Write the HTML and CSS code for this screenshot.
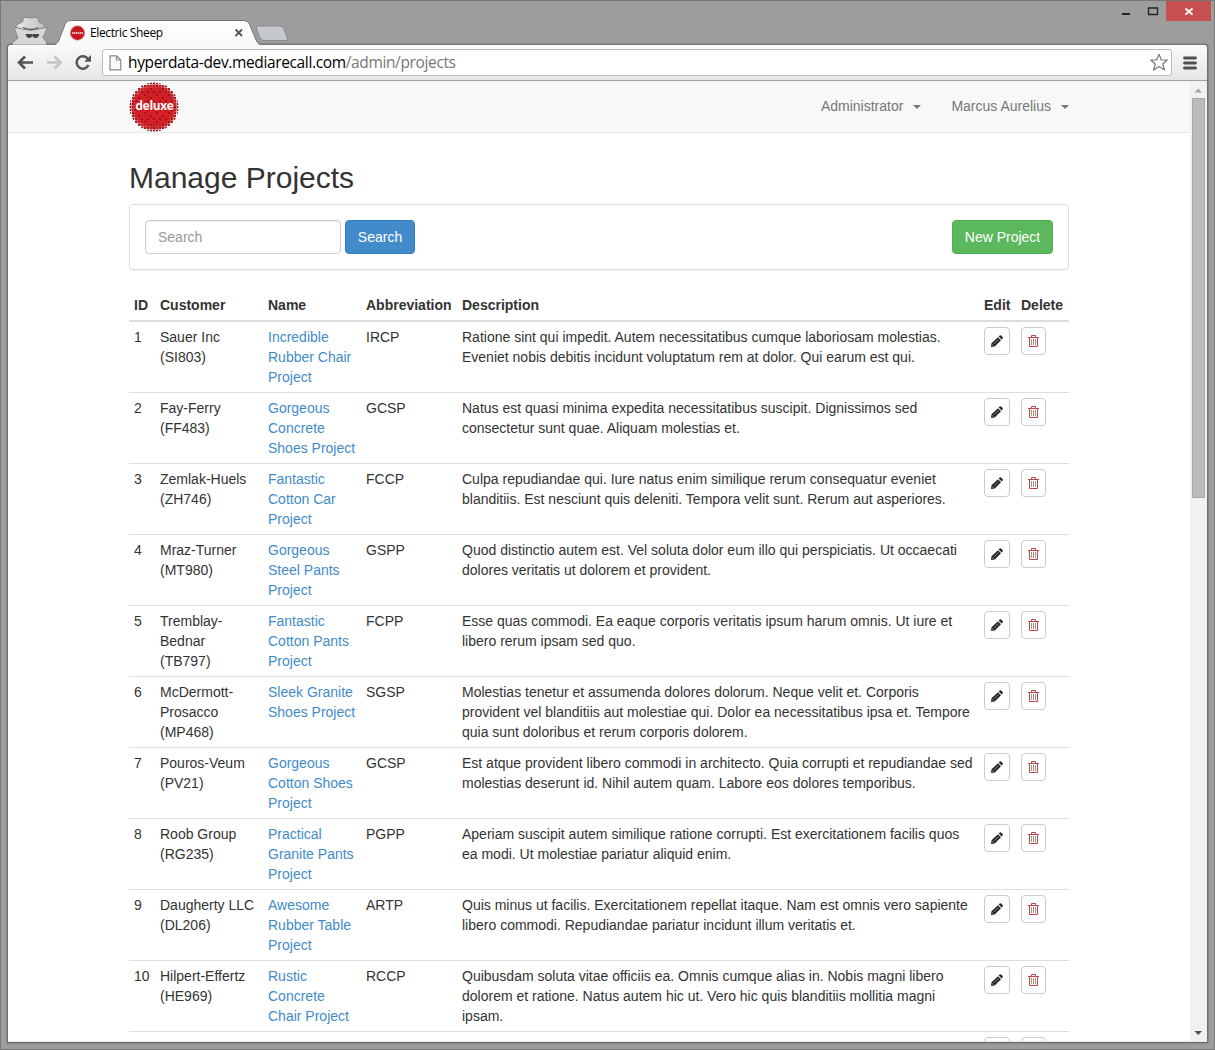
FILE: index.html
```html
<!DOCTYPE html>
<html lang="en">
<head>
<meta charset="utf-8">
<title>Electric Sheep</title>
<link rel="stylesheet" href="styles.css">
</head>
<body>
<svg class="defs" width="0" height="0">
  <defs>
    <linearGradient id="tabfill" x1="0" y1="0" x2="0" y2="1"><stop offset="0" stop-color="#fff"/><stop offset="1" stop-color="#f8f8f8"/></linearGradient>
    <linearGradient id="hat" x1="0" y1="0" x2="1" y2="0"><stop offset="0" stop-color="#e8e8e8"/><stop offset="1" stop-color="#c0c0c0"/></linearGradient>
    <radialGradient id="core"><stop offset="0" stop-color="#d92027"/><stop offset=".78" stop-color="#d11f25"/><stop offset=".92" stop-color="#d11f25" stop-opacity=".75"/><stop offset="1" stop-color="#d11f25" stop-opacity="0"/></radialGradient>
    <pattern id="dots" width="3" height="3" patternUnits="userSpaceOnUse"><rect width="2" height="2" fill="#7a2224"/></pattern>
    <pattern id="grain" width="12" height="9" patternUnits="userSpaceOnUse"><path d="M0 0h2v2H0zM6 0h2v2H6zM3 3h2v2H3zM9 6h2v2H9zM6 6h1v1H6z" fill="#5f0508" opacity=".45"/></pattern>
    <symbol id="pencil" viewBox="0 0 14 14"><path d="M1 13l.5-3.700L8 3.200l3 3L4.800 12.500zM8.700 2.600l1-1q.7-.6 1.400 0l1.500 1.500q.6.7 0 1.400l-1 1z" fill="#26262e"/><path d="M1.900 10.200l2 2M4 9.900l4.600-4.600" stroke="#a09a98" stroke-width=".8"/></symbol>
    <symbol id="trash" viewBox="0 0 11 12"><path d="M0 2.500h11M3.500 2.500v-2h4v2M1.500 3v8.500h8V3" fill="none" stroke="#b8484a"/><path d="M3.500 4v6M7.500 4v6" stroke="#b98a90"/><path d="M5.500 4v6" stroke="#6aa564"/></symbol>
  </defs>
</svg>
<div class="window">
  <header class="titlebar">
    <svg class="tabs" width="300" height="45" viewBox="0 0 300 45">
      <g stroke="#888" stroke-width="1">
        <path d="M12.500 45V42.500L18 38L14 27.500L19.500 28L23 25.500H38.500L42 28L47.500 27.500L43 37.500L46.500 42V45Z" fill="#d6d6d6"/>
        <path d="M15.500 27Q18 23 22.500 22L23.500 18Q27 16.500 30.500 18Q34 16.500 38 18L39 22Q43 23 45.500 27Q30 33 15.500 27Z" fill="url(#hat)"/>
      </g>
      <path d="M23 27.500Q31 31.500 38.500 27.500" fill="none" stroke="#555" stroke-width="1.300"/>
      <path d="M25.500 34H31.500L32 35L33 34H39Q39 38 35.500 38Q33 38 32.500 36Q31.500 38 29 38Q26 37.500 25.500 34Z" fill="#444"/>
      <path d="M50 45.500Q57 45.500 59 40L65 24.500Q66.500 20.500 70 20.500H244Q248 20.500 249.500 24.500L256 40Q258 45.500 265 45.500Z" fill="url(#tabfill)" stroke="#777"/>
      <path d="M258.500 26H280Q283 26 284 29L287.500 38Q288.500 40.500 285 40.500H264Q261 40.500 260 38L256.500 29Q255.500 26 258.500 26Z" fill="#c5c9ce" stroke="#888"/>
      <circle cx="77.500" cy="33" r="7.200" fill="#c3191f" stroke="#d88" stroke-width=".6"/>
      <path d="M72 33H83" stroke="#f1b9bb" stroke-width="2.200" stroke-dasharray="1.500 .5"/>
      <path d="M235.500 29.500L242 36M242 29.500L235.500 36" stroke="#555" stroke-width="1.800"/>
    </svg>
    <span class="tab-title">Electric Sheep</span>
    <svg class="controls" width="100" height="22" viewBox="0 0 100 22">
      <path d="M8 13h8v2h-8z" fill="#222"/>
      <path d="M34.500 8h9v6.500h-9zM34 8h10" fill="none" stroke="#222" stroke-width="1.300"/>
      <path d="M52 1h45v20H52z" fill="#c75050"/>
      <path d="M71.500 8.500L78.500 14.700M78.500 8.500L71.500 14.700" stroke="#fff" stroke-width="1.800"/>
    </svg>
  </header>
  <div class="frame">
    <div class="toolbar">
      <svg class="nav-icons" width="94" height="35" viewBox="1 0 94 35">
        <path d="M26 17.500H12M18 11.500L12 17.500L18 23.500" fill="none" stroke="#555" stroke-width="2.600"/>
        <path d="M40 17.500H53M47.500 11.500L53.500 17.500L47.500 23.500" fill="none" stroke="#c4c4c4" stroke-width="2.600"/>
        <path d="M81 14A6.200 6.200 0 1 0 81.500 20" fill="none" stroke="#555" stroke-width="2.500"/><path d="M84 10V16.700H77.300Z" fill="#555"/>
      </svg>
      <div class="address">
        <svg width="13" height="16" viewBox="0 0 13 16"><path d="M1 .8H7.500L11.800 5V14.800H1ZM7.500 .8V5H11.800" fill="#fafafa" stroke="#888" stroke-width="1.200"/></svg>
        <span class="url">hyperdata-dev.mediarecall.com<span class="path">/admin/projects</span></span>
        <svg class="star" width="20" height="19" viewBox="0 0 20 19"><path d="M10 1.200L12.400 7H18.300L13.700 11L15.500 17L10 13.600L4.500 17L6.300 11L1.700 7H7.600Z" fill="#fff" stroke="#777" stroke-width="1.200" stroke-linejoin="round"/></svg>
      </div>
      <svg class="menu" width="14" height="14" viewBox="0 0 14 14"><path d="M1.500 2H12.500M1.500 7H12.500M1.500 12H12.500" stroke="#505050" stroke-width="2.800" stroke-linecap="round"/></svg>
    </div>
    <div class="viewport">
      <main class="page">
        <nav class="navbar">
          <div class="container bar">
            <svg class="logo" width="50" height="50" viewBox="0 0 50 50">
              <circle cx="25" cy="25" r="24.500" fill="url(#dots)"/>
              <circle cx="25" cy="25" r="24" fill="url(#core)"/>
              <circle cx="25" cy="25" r="22" fill="url(#grain)"/>
              <text x="25.500" y="27.500" text-anchor="middle" textLength="38" lengthAdjust="spacingAndGlyphs" class="logo-text">deluxe</text>
            </svg>
            <div class="menus">
              <span class="w-admin">Administrator</span><i class="caret"></i>
              <span class="w-user">Marcus Aurelius</span><i class="caret"></i>
            </div>
          </div>
        </nav>
        <div class="container">
          <h1>Manage Projects</h1>
          <div class="panel">
            <input class="search" type="text" placeholder="Search">
            <button class="btn primary">Search</button>
            <button class="btn success">New Project</button>
          </div>
          <table class="projects">
            <colgroup><col class="c-id"><col class="c-customer"><col class="c-name"><col class="c-abbr"><col class="c-desc"><col class="c-edit"><col class="c-delete"></colgroup>
            <thead><tr><th>ID</th><th>Customer</th><th>Name</th><th>Abbreviation</th><th>Description</th><th>Edit</th><th>Delete</th></tr></thead>
            <tbody>
              <tr><td>1</td><td>Sauer Inc<br>(SI803)</td><td><a>Incredible<br>Rubber Chair<br>Project</a></td><td>IRCP</td><td>Ratione sint qui impedit. Autem necessitatibus cumque laboriosam molestias.<br>Eveniet nobis debitis incidunt voluptatum rem at dolor. Qui earum est qui.</td><td><button class="icon edit"><svg width="14" height="14"><use href="#pencil"/></svg></button></td><td><button class="icon delete"><svg width="11" height="12"><use href="#trash"/></svg></button></td></tr>
              <tr><td>2</td><td>Fay-Ferry<br>(FF483)</td><td><a>Gorgeous<br>Concrete<br>Shoes Project</a></td><td>GCSP</td><td>Natus est quasi minima expedita necessitatibus suscipit. Dignissimos sed<br>consectetur sunt quae. Aliquam molestias et.</td><td><button class="icon edit"><svg width="14" height="14"><use href="#pencil"/></svg></button></td><td><button class="icon delete"><svg width="11" height="12"><use href="#trash"/></svg></button></td></tr>
              <tr><td>3</td><td>Zemlak-Huels<br>(ZH746)</td><td><a>Fantastic<br>Cotton Car<br>Project</a></td><td>FCCP</td><td>Culpa repudiandae qui. Iure natus enim similique rerum consequatur eveniet<br>blanditiis. Est nesciunt quis deleniti. Tempora velit sunt. Rerum aut asperiores.</td><td><button class="icon edit"><svg width="14" height="14"><use href="#pencil"/></svg></button></td><td><button class="icon delete"><svg width="11" height="12"><use href="#trash"/></svg></button></td></tr>
              <tr><td>4</td><td>Mraz-Turner<br>(MT980)</td><td><a>Gorgeous<br>Steel Pants<br>Project</a></td><td>GSPP</td><td>Quod distinctio autem est. Vel soluta dolor eum illo qui perspiciatis. Ut occaecati<br>dolores veritatis ut dolorem et provident.</td><td><button class="icon edit"><svg width="14" height="14"><use href="#pencil"/></svg></button></td><td><button class="icon delete"><svg width="11" height="12"><use href="#trash"/></svg></button></td></tr>
              <tr><td>5</td><td>Tremblay-<br>Bednar<br>(TB797)</td><td><a>Fantastic<br>Cotton Pants<br>Project</a></td><td>FCPP</td><td>Esse quas commodi. Ea eaque corporis veritatis ipsum harum omnis. Ut iure et<br>libero rerum ipsam sed quo.</td><td><button class="icon edit"><svg width="14" height="14"><use href="#pencil"/></svg></button></td><td><button class="icon delete"><svg width="11" height="12"><use href="#trash"/></svg></button></td></tr>
              <tr><td>6</td><td>McDermott-<br>Prosacco<br>(MP468)</td><td><a>Sleek Granite<br>Shoes Project</a></td><td>SGSP</td><td>Molestias tenetur et assumenda dolores dolorum. Neque velit et. Corporis<br>provident vel blanditiis aut molestiae qui. Dolor ea necessitatibus ipsa et. Tempore<br>quia sunt doloribus et rerum corporis dolorem.</td><td><button class="icon edit"><svg width="14" height="14"><use href="#pencil"/></svg></button></td><td><button class="icon delete"><svg width="11" height="12"><use href="#trash"/></svg></button></td></tr>
              <tr><td>7</td><td>Pouros-Veum<br>(PV21)</td><td><a>Gorgeous<br>Cotton Shoes<br>Project</a></td><td>GCSP</td><td>Est atque provident libero commodi in architecto. Quia corrupti et repudiandae sed<br>molestias deserunt id. Nihil autem quam. Labore eos dolores temporibus.</td><td><button class="icon edit"><svg width="14" height="14"><use href="#pencil"/></svg></button></td><td><button class="icon delete"><svg width="11" height="12"><use href="#trash"/></svg></button></td></tr>
              <tr><td>8</td><td>Roob Group<br>(RG235)</td><td><a>Practical<br>Granite Pants<br>Project</a></td><td>PGPP</td><td>Aperiam suscipit autem similique ratione corrupti. Est exercitationem facilis quos<br>ea modi. Ut molestiae pariatur aliquid enim.</td><td><button class="icon edit"><svg width="14" height="14"><use href="#pencil"/></svg></button></td><td><button class="icon delete"><svg width="11" height="12"><use href="#trash"/></svg></button></td></tr>
              <tr><td>9</td><td>Daugherty LLC<br>(DL206)</td><td><a>Awesome<br>Rubber Table<br>Project</a></td><td>ARTP</td><td>Quis minus ut facilis. Exercitationem repellat itaque. Nam est omnis vero sapiente<br>libero commodi. Repudiandae pariatur incidunt illum veritatis et.</td><td><button class="icon edit"><svg width="14" height="14"><use href="#pencil"/></svg></button></td><td><button class="icon delete"><svg width="11" height="12"><use href="#trash"/></svg></button></td></tr>
              <tr><td>10</td><td>Hilpert-Effertz<br>(HE969)</td><td><a>Rustic<br>Concrete<br>Chair Project</a></td><td>RCCP</td><td>Quibusdam soluta vitae officiis ea. Omnis cumque alias in. Nobis magni libero<br>dolorem et ratione. Natus autem hic ut. Vero hic quis blanditiis mollitia magni<br>ipsam.</td><td><button class="icon edit"><svg width="14" height="14"><use href="#pencil"/></svg></button></td><td><button class="icon delete"><svg width="11" height="12"><use href="#trash"/></svg></button></td></tr>
              <tr><td></td><td></td><td></td><td></td><td></td><td><button class="icon edit"></button></td><td><button class="icon delete"></button></td></tr>
            </tbody>
          </table>
        </div>
      </main>
      <div class="scrollbar">
        <svg width="16" height="17"><path d="M4.500 11.500L8.300 7.500L12 11.500Z" fill="#a0a0a0"/></svg>
        <div class="thumb"></div>
        <svg class="down" width="16" height="17"><path d="M4.500 7H12L8.300 11Z" fill="#505050"/></svg>
      </div>
    </div>
  </div>
</div>
</body>
</html>
```
FILE: styles.css
```css
* { box-sizing: border-box; }
body { margin: 0; overflow: hidden; font: 14px/20px "Liberation Sans", Arial, sans-serif; color: #333; }
.defs { position: absolute; }
svg { display: block; flex: none; }
.window { width: 1215px; height: 1050px; border: 1px solid #777; background: #9d9d9d; display: flex; flex-direction: column; padding: 0 6px 6px; }
.titlebar { height: 45px; flex: none; position: relative; display: flex; margin: -1px -7px 0; }
.tabs { z-index: 2; }
.tab-title { position: absolute; z-index: 3; left: 90px; top: 24px; font: 12px/18px "Open Sans", sans-serif; color: #000; white-space: nowrap; letter-spacing: -.38px; }
.controls { margin-left: auto; margin-right: 1px; }
.frame { flex: 1; min-height: 0; display: flex; flex-direction: column; background: #f4f4f4; border: 1px solid #707070; border-top-color: #777; border-radius: 4px 4px 0 0; margin-top: -1px; box-shadow: 0 0 2px #555; }
.toolbar { height: 36px; flex: none; display: flex; align-items: center; background: linear-gradient(#fafafa, #e6e6e6); border-bottom: 1px solid #a0a0a0; border-radius: 4px 4px 0 0; }
.address { width: 1070px; height: 27px; border: 1px solid #bbb; border-radius: 3px; background: #fff; display: flex; align-items: center; padding-left: 6px; }
.url { margin: -2px 0 0 6px; font: 15.5px/22px "Open Sans", sans-serif; color: #000; white-space: nowrap; letter-spacing: -.36px; }
.path { color: #777; }
.star { margin-left: auto; margin-right: 2px; }
.menu { margin-left: 11px; }
.viewport { flex: 1; min-height: 0; display: flex; border-bottom: 1px solid #e4e4e4; }
.page { width: 1182px; overflow: hidden; background: #fff; }
.container { width: 940px; margin-left: 121px; }
.navbar { height: 52px; background: #f8f8f8; border-bottom: 1px solid #e7e7e7; }
.bar { display: flex; justify-content: space-between; }
.logo { margin-top: 1px; }
.logo-text { font: 900 13px Lato, sans-serif; fill: #fff; }
.menus { display: flex; align-items: center; height: 50px; color: #777; white-space: nowrap; }
.caret { width: 8px; border: 4px solid transparent; border-top-color: #777; border-bottom: 0; margin-left: 10px; margin-top: 1px; }
.w-user { margin-left: 30px; }
h1 { font-weight: 400; font-size: 30px; line-height: 33px; margin: 28px 0 10px; }
.panel { height: 66px; padding: 15px; border: 1px solid #ddd; border-radius: 4px; box-shadow: 0 1px 1px rgba(0,0,0,.05); display: flex; }
.search { width: 196px; height: 34px; padding: 6px 12px; border: 1px solid #ccc; border-radius: 4px; font: inherit; box-shadow: inset 0 1px 1px rgba(0,0,0,.075); }
.search::placeholder { color: #999; }
.btn { height: 34px; border: 1px solid; border-radius: 4px; color: #fff; font: inherit; padding: 0; }
.primary { width: 70px; margin-left: 4px; background: #428bca; border-color: #357ebd; }
.success { width: 101px; margin-left: auto; background: #5cb85c; border-color: #4cae4c; }
.projects { width: 940px; table-layout: fixed; border-collapse: separate; border-spacing: 0; margin-top: 20px; white-space: nowrap; }
.c-id { width: 26px; }
.c-customer { width: 108px; }
.c-name { width: 98px; }
.c-abbr { width: 96px; }
.c-desc { width: 522px; }
.c-edit { width: 37px; }
.c-delete { width: 53px; }
th { text-align: left; padding: 5px; border-bottom: 2px solid #ddd; }
td { height: 71px; padding: 5px; vertical-align: top; border-top: 1px solid #ddd; }
tbody tr:first-child td { border-top: 0; height: 70px; }
a { color: #428bca; }
.icon { display: flex; align-items: center; justify-content: center; height: 28px; border: 1px solid #ccc; border-radius: 4px; background: #fff; padding: 0; }
.edit { width: 26px; }
.delete { width: 25px; }
.scrollbar { flex: 1; background: #f1f1f1; display: flex; flex-direction: column; }
.thumb { width: 13px; height: 400px; margin-left: 2px; background: #bcbcbc; border: 1px solid #a8a8a8; }
.down { margin-top: auto; }
```
